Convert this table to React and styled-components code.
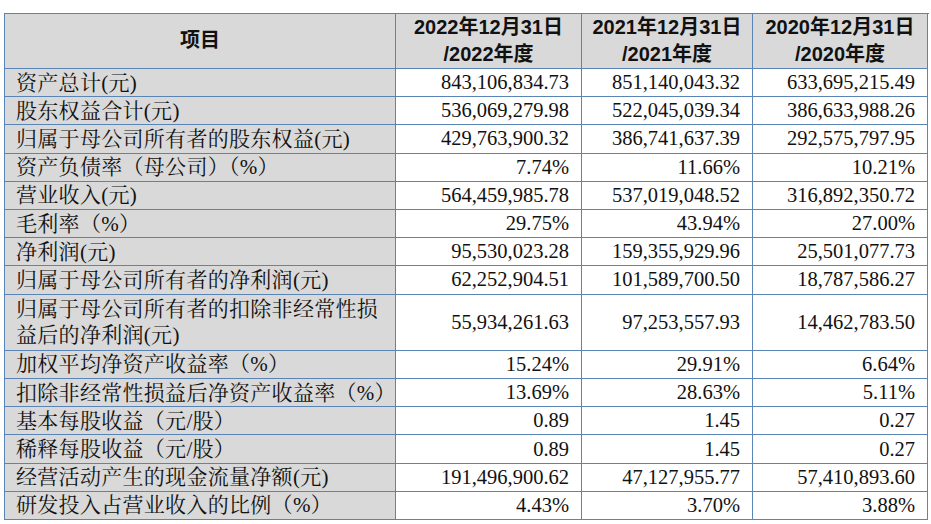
import React from "react";
import styled, { createGlobalStyle } from "styled-components";

const rows = [
  { label: "资产总计(元)", values: ["843,106,834.73", "851,140,043.32", "633,695,215.49"] },
  { label: "股东权益合计(元)", values: ["536,069,279.98", "522,045,039.34", "386,633,988.26"] },
  { label: "归属于母公司所有者的股东权益(元)", values: ["429,763,900.32", "386,741,637.39", "292,575,797.95"] },
  { label: "资产负债率（母公司）（%）", values: ["7.74%", "11.66%", "10.21%"] },
  { label: "营业收入(元)", values: ["564,459,985.78", "537,019,048.52", "316,892,350.72"] },
  { label: "毛利率（%）", values: ["29.75%", "43.94%", "27.00%"] },
  { label: "净利润(元)", values: ["95,530,023.28", "159,355,929.96", "25,501,077.73"] },
  { label: "归属于母公司所有者的净利润(元)", values: ["62,252,904.51", "101,589,700.50", "18,787,586.27"] },
  { label: "归属于母公司所有者的扣除非经常性损益后的净利润(元)", values: ["55,934,261.63", "97,253,557.93", "14,462,783.50"], tall: true },
  { label: "加权平均净资产收益率（%）", values: ["15.24%", "29.91%", "6.64%"] },
  { label: "扣除非经常性损益后净资产收益率（%）", values: ["13.69%", "28.63%", "5.11%"] },
  { label: "基本每股收益（元/股）", values: ["0.89", "1.45", "0.27"] },
  { label: "稀释每股收益（元/股）", values: ["0.89", "1.45", "0.27"] },
  { label: "经营活动产生的现金流量净额(元)", values: ["191,496,900.62", "47,127,955.77", "57,410,893.60"] },
  { label: "研发投入占营业收入的比例（%）", values: ["4.43%", "3.70%", "3.88%"] },
];

const GlobalStyle = createGlobalStyle`
  body {
    margin: 0;
    background: #ffffff;
  }
`;

const Page = styled.div`
  padding: 13px 0 0 4px;
`;

const Table = styled.div`
  display: grid;
  grid-template-columns: 391px 186px 171px 175px;
  grid-template-rows: 55px;
  grid-auto-rows: 28.19px;
  width: 924px;
  border-top: 1px solid #5a83b6;
  border-left: 1px solid #5a83b6;
  color: #111;
`;

const Cell = styled.div`
  border-right: 1px solid #5a83b6;
  border-bottom: 1px solid #5a83b6;
  display: flex;
  align-items: center;
  box-sizing: border-box;
  ${(p) => (p.$tall ? "grid-row: span 2;" : "white-space: nowrap;")}
`;

const HeadCell = styled(Cell)`
  background: #d9d9d9;
  justify-content: center;
  text-align: center;
  font-family: "Liberation Sans", "Noto Sans CJK SC", sans-serif;
  font-weight: bold;
  font-size: 20px;
  line-height: 27px;
  padding-bottom: 1px;
`;

const LabelCell = styled(Cell)`
  background: #d9d9d9;
  padding: 0 8px 0 11px;
  font-family: "Liberation Serif", "Noto Serif CJK SC", "Noto Sans CJK SC", serif;
  font-size: 21px;
  letter-spacing: 0.3px;
  line-height: 26px;
  overflow: hidden;
`;

const ValueCell = styled(Cell)`
  background: #ffffff;
  justify-content: flex-end;
  padding-right: 12px;
  font-family: "Liberation Serif", serif;
  font-size: 20.5px;
`;

export default function App() {
  return (
    <Page>
      <GlobalStyle />
      <Table>
        <HeadCell>项目</HeadCell>
        <HeadCell>2022年12月31日<br />/2022年度</HeadCell>
        <HeadCell>2021年12月31日<br />/2021年度</HeadCell>
        <HeadCell>2020年12月31日<br />/2020年度</HeadCell>
        {rows.map((row) => (
          <React.Fragment key={row.label}>
            <LabelCell $tall={row.tall}>{row.label}</LabelCell>
            {row.values.map((v, i) => (
              <ValueCell key={i} $tall={row.tall}>{v}</ValueCell>
            ))}
          </React.Fragment>
        ))}
      </Table>
    </Page>
  );
}
